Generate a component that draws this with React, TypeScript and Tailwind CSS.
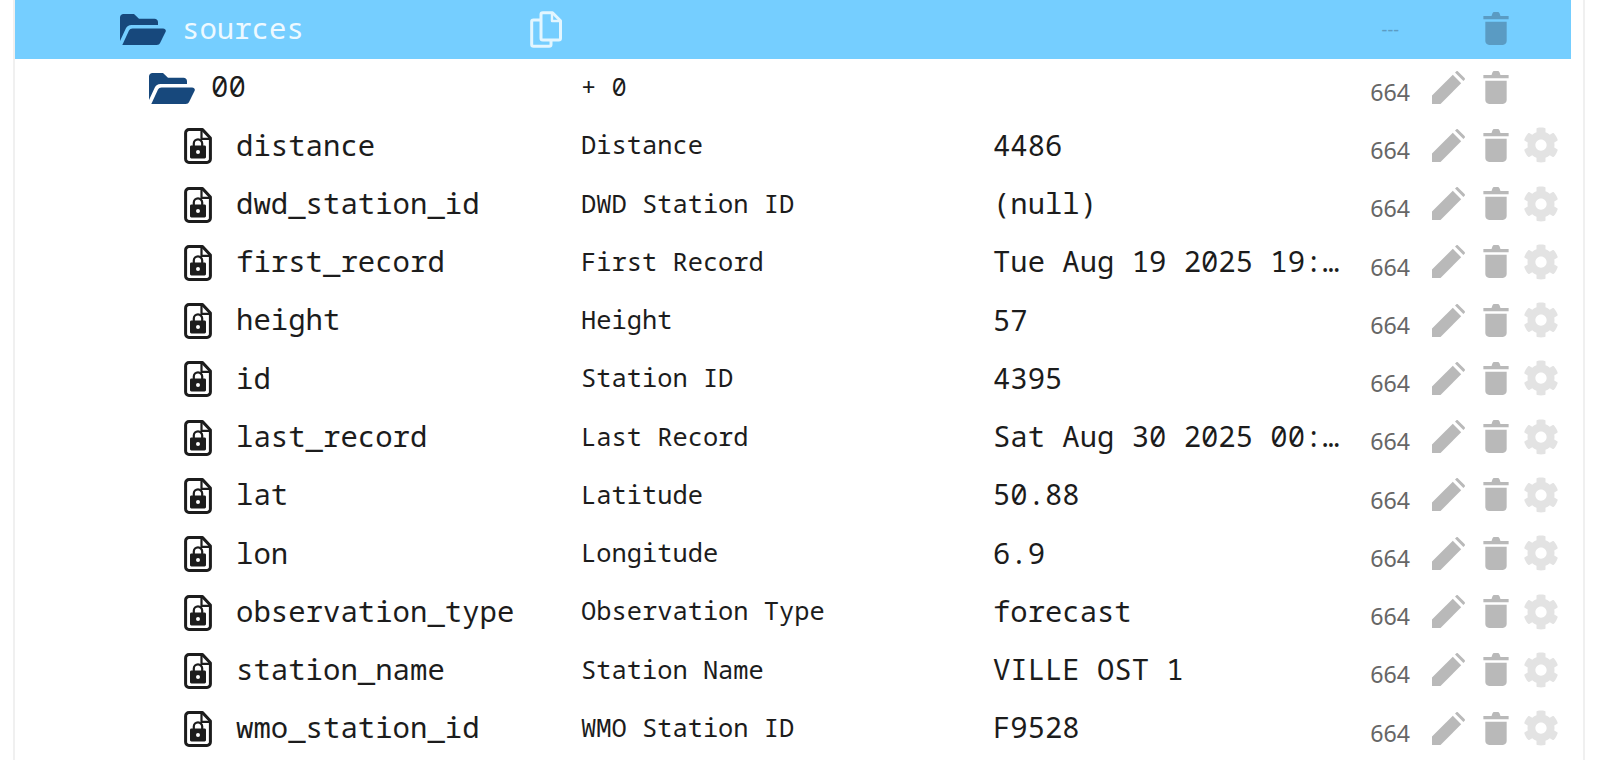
import React from "react";
import { FaCog } from "react-icons/fa";

const mono = "font-['Noto_Sans_Mono','DejaVu_Sans_Mono','Liberation_Mono',monospace]";

function FolderOpen({ className }: { className: string }) {
  return (
    <svg viewBox="0 0 46 31" className={className} fill="currentColor">
      <path d="M0 27V3.5C0 1.5 1.5 0 3.5 0H14l5 4.8h15.5c2 0 3.5 1.5 3.5 3.500V11H11.500C8.600 11 7 12.200 5.800 14.500L0 27z" />
      <path d="M2.300 31 9 16.600c.7-1.400 1.900-2.200 3.500-2.200H43c2.200 0 3.400 1.600 2.600 3.400l-5.400 11c-.7 1.400-1.900 2.200-3.500 2.200H2.300z" />
    </svg>
  );
}

function FileLock({ className }: { className: string }) {
  return (
    <svg viewBox="0 0 28 36" className={className}>
      <path d="M5 1.600h13.500L26.400 10v21a3.400 3.400 0 0 1-3.400 3.400H5A3.400 3.400 0 0 1 1.600 31V5A3.400 3.400 0 0 1 5 1.600z" fill="none" stroke="currentColor" strokeWidth="3" strokeLinejoin="round" />
      <path d="M17.500 2v8.800h8.500" fill="none" stroke="currentColor" strokeWidth="2.200" />
      <path d="M9.800 18v-2.400a4.200 4.200 0 0 1 8.400 0V18" fill="none" stroke="currentColor" strokeWidth="2.200" />
      <path fillRule="evenodd" d="M7.400 17.500h13.200c.8 0 1.400.6 1.400 1.400v10.200c0 .8-.6 1.400-1.400 1.400H7.400c-.8 0-1.400-.6-1.400-1.400V18.900c0-.8.6-1.400 1.400-1.400zM14 22a2 2 0 1 0 0 4 2 2 0 0 0 0-4z" fill="currentColor" />
    </svg>
  );
}

function Copy({ className }: { className: string }) {
  return (
    <svg viewBox="0 0 32 37" className={className} fill="none" stroke="currentColor" strokeWidth="3" strokeLinejoin="round">
      <path d="M11 3.500c0-1 .8-1.800 1.800-1.800h9.700l8 8v17.600c0 1-.8 1.800-1.800 1.800H12.800c-1 0-1.800-.8-1.800-1.800V3.500z" />
      <path d="M22 2v8h8.500" strokeWidth="2.400" />
      <path d="M11 9H3.500c-1 0-1.800.8-1.800 1.800v22.700c0 1 .8 1.800 1.800 1.800h15.700c1 0 1.800-.8 1.800-1.800V29" />
    </svg>
  );
}

function Pencil({ className }: { className: string }) {
  return (
    <svg viewBox="0 0 33 33" className={className} fill="currentColor">
      <path d="M0 24.500 20.800 3.800l8.400 8.400L8.500 33H0v-8.500z" />
      <path d="M23 1.600 24.200.4c.5-.5 1.300-.5 1.800 0l6.600 6.600c.5.5.5 1.300 0 1.800l-1.200 1.200L23 1.600z" />
    </svg>
  );
}

function Trash({ className }: { className: string }) {
  return (
    <svg viewBox="0 0 26 34" className={className} fill="currentColor">
      <path d="M0 4h8.400l1-2.600C9.800.5 10.500 0 11.400 0h3.200c.9 0 1.600.5 2 1.400l1 2.600H26v3.400H0V4z" />
      <path d="M2 10h22v20c0 2.200-1.800 4-4 4H6c-2.200 0-4-1.800-4-4V10z" />
    </svg>
  );
}

const rows: [string, string, string][] = [
  ["distance", "Distance", "4486"],
  ["dwd_station_id", "DWD Station ID", "(null)"],
  ["first_record", "First Record", "Tue Aug 19 2025 19:00:00 GMT"],
  ["height", "Height", "57"],
  ["id", "Station ID", "4395"],
  ["last_record", "Last Record", "Sat Aug 30 2025 00:00:00 GMT"],
  ["lat", "Latitude", "50.88"],
  ["lon", "Longitude", "6.9"],
  ["observation_type", "Observation Type", "forecast"],
  ["station_name", "Station Name", "VILLE OST 1"],
  ["wmo_station_id", "WMO Station ID", "F9528"],
];

function Actions({ gear }: { gear: boolean }) {
  return (
    <div className="flex items-center">
      <span className="mt-[8px] w-[67px] pr-[22px] text-right font-['Noto_Sans','Open_Sans',sans-serif] text-[23.2px] text-[#666]">664</span>
      <Pencil className="mb-[2px] h-[33px] w-[33px] text-[#b9b9b9]" />
      <span className="w-[18px]" />
      <Trash className="mb-[2px] h-[33px] w-[26px] text-[#b9b9b9]" />
      <span className="w-[14px]" />
      {gear ? <FaCog className="mb-[2px] h-[36px] w-[36px] text-[#e3e3e3]" /> : <span className="w-[36px]" />}
    </div>
  );
}

export default function App() {
  return (
    <div className={`h-[760px] w-[1600px] overflow-hidden bg-white ${mono}`}>
      <div className="ml-[13px] mr-[15px] h-full border-x-2 border-[#f0f0f0]">
        <div className="flex h-[59px] w-[1556px] items-center bg-[#75ceff]">
          <FolderOpen className="ml-[105px] h-[31px] w-[46px] text-[#17487c]" />
          <span className="ml-[16px] w-[348px] pb-[4px] text-[29px] text-[#eef9ff]">sources</span>
          <Copy className="h-[37px] w-[32px] text-[#e3f6ff]" />
          <span className="ml-[793px] w-[66px] pr-[22px] text-right font-['Noto_Sans',sans-serif] text-[18px] text-[#5b9cc4]">---</span>
          <span className="w-[62px]" />
          <Trash className="mb-[2px] h-[33px] w-[26px] text-[#5a9bc3]" />
        </div>
        <div className="flex h-[58.27px] w-[1556px] items-center">
          <FolderOpen className="ml-[134px] h-[31px] w-[46px] text-[#17487c]" />
          <span className="ml-[16px] w-[370px] pb-[4px] text-[29px] text-[#1c1c1c]">00</span>
          <span className="w-[412px] pb-[4px] text-[25.4px] text-[#1c1c1c]">+ 0</span>
          <span className="w-[372px]" />
          <Actions gear={false} />
        </div>
        {rows.map(([name, label, value]) => (
          <div key={name} className="flex h-[58.27px] w-[1556px] items-center">
            <FileLock className="ml-[169px] h-[36px] w-[28px] text-[#1c1c1c]" />
            <span className="ml-[24px] w-[345px] pb-[4px] text-[29px] text-[#1c1c1c]">{name}</span>
            <span className="w-[412px] pb-[4px] text-[25.4px] text-[#1c1c1c]">{label}</span>
            <span className="mr-[16px] w-[356px] truncate pb-[4px] text-[28.9px] text-[#1c1c1c]">{value}</span>
            <Actions gear />
          </div>
        ))}
      </div>
    </div>
  );
}
